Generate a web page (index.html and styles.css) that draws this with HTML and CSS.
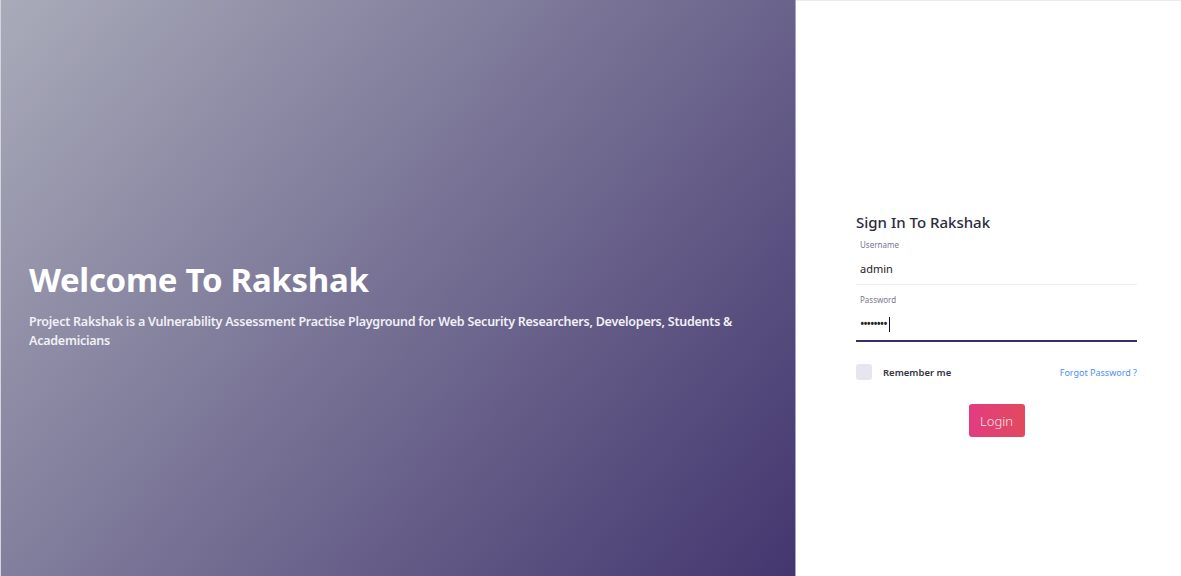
FILE: index.html
```html
<!DOCTYPE html>
<html lang="en">
<head>
<meta charset="utf-8">
<title>Rakshak - Sign In</title>
<link rel="stylesheet" href="styles.css">
</head>
<body>
<div class="page">
  <section class="hero">
    <div class="hero-text">
      <h1 class="hero-title">Welcome To Rakshak</h1>
      <p class="hero-sub">Project Rakshak is a Vulnerability Assessment Practise Playground for Web Security Researchers, Developers, Students &amp; Academicians</p>
    </div>
  </section>
  <section class="auth">
    <form class="form">
      <h2 class="form-title">Sign In To Rakshak</h2>
      <div class="field">
        <label class="field-label">Username</label>
        <div class="field-value">admin</div>
      </div>
      <div class="field field-active">
        <label class="field-label">Password</label>
        <div class="field-value dots">••••••••<span class="caret"></span></div>
      </div>
      <div class="options">
        <label class="remember"><span class="check"></span>Remember me</label>
        <a class="forgot">Forgot Password ?</a>
      </div>
      <div class="actions">
        <button type="button" class="btn-login">Login</button>
      </div>
    </form>
  </section>
</div>
</body>
</html>
```
FILE: styles.css
```css
* { box-sizing: border-box; }
html, body { margin: 0; padding: 0; height: 100%; }
body {
  font-family: "Noto Sans", "Open Sans", sans-serif;
  background: #fff;
}
.page {
  display: flex;
  height: 576px;
  border-left: 1px solid #d4d4dc;
}
.hero {
  width: 795px;
  flex: none;
  background: linear-gradient(130deg, #a9abb9 0%, #43366f 100%);
  border-right: 1px solid #a9a3c4;
  display: flex;
  align-items: center;
  padding-left: 28px;
  padding-top: 33px;
}
.hero-text { color: #fff; }
.hero-title {
  margin: 0 0 12px 0;
  font-size: 33px;
  font-weight: 700;
  line-height: 40px;
  letter-spacing: -0.3px;
}
.hero-sub {
  margin: 0;
  width: 740px;
  font-size: 12.5px;
  font-weight: 600;
  line-height: 19px;
  letter-spacing: -0.25px;
  color: #f1f0f5;
}
.auth {
  flex: 1;
  border-top: 1px solid #ececf0;
  padding: 210px 0 0 60px;
}
.form { width: 281px; }
.form-title {
  margin: 0 0 6px 0;
  font-size: 15px;
  font-weight: 500;
  color: #2b2b3d;
  line-height: 22px;
}
.field {
  border-bottom: 1px solid #ebebf2;
  padding: 0 0 7px 4px;
  margin-bottom: 9px;
}
.field-active { border-bottom: 2px solid #3a2d68; padding-bottom: 8px; }
.field-label {
  display: block;
  font-size: 8px;
  color: #7a7592;
  line-height: 12px;
  margin-bottom: 10px;
}
.field-value {
  font-size: 11px;
  color: #222;
  line-height: 16px;
}
.dots { letter-spacing: -1.2px; font-size: 12px; display: flex; align-items: center; }
.caret {
  display: inline-block;
  width: 1px;
  height: 15px;
  background: #111;
  margin-left: 2px;
}
.options {
  display: flex;
  justify-content: space-between;
  align-items: center;
  margin-top: 22px;
}
.remember {
  display: flex;
  align-items: center;
  font-size: 9.5px;
  font-weight: 600;
  color: #35353f;
}
.check {
  width: 16px;
  height: 16px;
  border-radius: 3px;
  background: #e6e6ee;
  margin-right: 11px;
}
.forgot {
  font-size: 9px;
  color: #4f8ff2;
}
.actions {
  display: flex;
  justify-content: center;
  margin-top: 24px;
}
.btn-login {
  width: 56px;
  height: 33px;
  border: none;
  border-radius: 3px;
  background: linear-gradient(90deg, #e23c80, #e24a5d);
  color: #fde8f0;
  font-family: inherit;
  font-size: 13px;
  font-weight: 300;
  padding: 0;
}
```
